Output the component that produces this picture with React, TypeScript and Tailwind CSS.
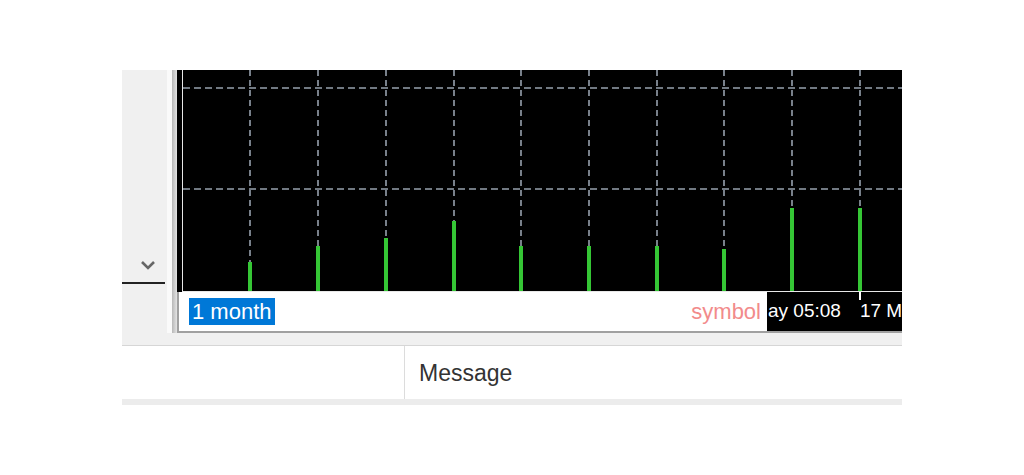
const gridX = [67, 135, 203, 271, 338, 406, 474, 541, 609, 677];
const barTops = [192, 176, 168, 151, 176, 176, 176, 179, 138, 138];

function Chart() {
  return (
    <svg width="719" height="221" className="block">
      <rect width="719" height="221" fill="#000" />
      {[18, 119].map((y) => (
        <line key={y} x1="0" x2="719" y1={y} y2={y} stroke="#97a1ad" strokeWidth="1.6" strokeDasharray="7 4" />
      ))}
      {gridX.map((x) => (
        <line key={x} x1={x} x2={x} y1="0" y2="221" stroke="#97a1ad" strokeWidth="1.6" strokeDasharray="6 4" />
      ))}
      {gridX.map((x, i) => (
        <rect key={x} x={x - 2} y={barTops[i]} width="4" height={221 - barTops[i]} fill="#35c635" />
      ))}
    </svg>
  );
}

export default function App() {
  return (
    <div className="h-[475px] w-[1024px] bg-white pl-[122px] pt-[70px]" style={{ fontFamily: '"Liberation Sans", Arial, sans-serif' }}>
      <div className="w-[780px]">
        <div className="flex h-[263px]">
          <div className="flex w-[45px] flex-col bg-[#f0f0f0]">
            <div className="h-[189px]" />
            <svg width="45" height="14" className="block">
              <polyline points="20,3 26,9 32,3" fill="none" stroke="#666" strokeWidth="2.6" />
            </svg>
            <div className="h-[9px]" />
            <div className="mr-[2px] h-[2px] bg-[#222]" />
          </div>
          <div className="flex w-[10px]">
            <div className="w-[5px] bg-[#fafafa]" />
            <div className="w-[5px] bg-gradient-to-r from-[#b8b8b8] to-[#e4e4e4]" />
          </div>
          <div className="flex flex-1 flex-col">
            <div className="flex h-[222px] bg-black pl-[5px]">
              <div className="flex-1 border-b border-l border-[#e8e8e8]">
                <Chart />
              </div>
            </div>
            <div className="flex h-[41px] border-b-2 border-l-2 border-[#a0a0a0] bg-white">
              <div className="flex flex-1 items-center justify-between pl-[10px] pr-[6px]">
                <span className="bg-[#0078d7] px-[3px] text-[22px] leading-[27px] text-white">1 month</span>
                <span className="text-[22px] leading-[27px] text-[#f28b8b]">symbol</span>
              </div>
              <div className="relative flex w-[135px] items-center overflow-hidden whitespace-nowrap bg-black pl-[1px] text-[19px] text-white">
                <span>ay 05:08</span>
                <span className="ml-[19px]">17 May</span>
                <div className="absolute left-[92px] top-0 h-[8px] w-[2px] bg-white" />
              </div>
            </div>
          </div>
        </div>
        <div className="h-[13px] border-b border-[#d6d6d6] bg-[#f0f0f0]" />
        <div className="flex h-[59px] border-b-[6px] border-[#ececec]">
          <div className="w-[283px] border-r border-[#dcdcdc]" />
          <div className="flex items-center pl-[14px] pt-[2px] text-[23px] text-[#333]">Message</div>
        </div>
      </div>
    </div>
  );
}
